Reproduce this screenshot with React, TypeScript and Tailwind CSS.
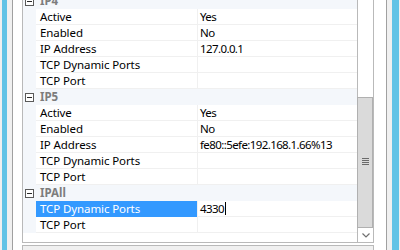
import React from "react";

type Item = { name: string; value: string; selected?: boolean };
type Group = { title: string; items: Item[] };

const groups: Group[] = [
  {
    title: "IP4",
    items: [
      { name: "Active", value: "Yes" },
      { name: "Enabled", value: "No" },
      { name: "IP Address", value: "127.0.0.1" },
      { name: "TCP Dynamic Ports", value: "" },
      { name: "TCP Port", value: "" },
    ],
  },
  {
    title: "IP5",
    items: [
      { name: "Active", value: "Yes" },
      { name: "Enabled", value: "No" },
      { name: "IP Address", value: "fe80::5efe:192.168.1.66%13" },
      { name: "TCP Dynamic Ports", value: "" },
      { name: "TCP Port", value: "" },
    ],
  },
  {
    title: "IPAll",
    items: [
      { name: "TCP Dynamic Ports", value: "4330", selected: true },
      { name: "TCP Port", value: "" },
    ],
  },
];

function MinusBox() {
  return (
    <div className="w-[9px] h-[9px] border border-[#5a5a5a] bg-white flex items-center justify-center">
      <div className="w-[5px] h-[1px] bg-[#2a2a2a]" />
    </div>
  );
}

function HeaderRow({ title }: { title: string }) {
  return (
    <div className="flex h-[16px] items-center bg-[#f4f7fb]">
      <div className="w-[13px] flex items-center pl-[2px]">
        <MinusBox />
      </div>
      <div className="pl-[4px] text-[#7d7d7d] font-bold leading-none">{title}</div>
    </div>
  );
}

function ItemRow({ item }: { item: Item }) {
  return (
    <div className="flex h-[16px]">
      <div className="w-[13px] bg-[#f4f7fb]" />
      <div
        className={
          item.selected
            ? "w-[162px] border-r border-r-[#f0f0f0] bg-[#3399ff] text-white pl-[4px] flex items-center leading-none tracking-[-0.1px]"
            : "w-[162px] border-r border-r-[#f0f0f0] border-b border-b-[#f0f0f0] bg-white text-black pl-[4px] flex items-center leading-none tracking-[-0.1px]"
        }
      >
        {item.name}
      </div>
      <div className="flex-1 border-b border-b-[#f0f0f0] bg-white text-black pl-[2px] flex items-center leading-none tracking-[-0.6px]">
        <span>{item.value}</span>
        {item.selected && <span className="w-[1px] h-[13px] bg-black ml-[1px]" />}
      </div>
    </div>
  );
}

export default function App() {
  return (
    <div
      className="w-[400px] h-[250px] overflow-hidden bg-[#f0f0f0] flex text-[11.5px]"
      style={{ fontFamily: '"Noto Sans", "Open Sans", sans-serif' }}
    >
      <div className="w-[2px] bg-[#f0f0f0]" />
      <div className="w-[5px] bg-[#62c3e6]" />
      <div className="w-[5px] bg-[#f0f0f0]" />
      <div className="w-[1px] bg-[#a0a0a0]" />
      <div className="flex-1 bg-white flex flex-col">
        <div className="flex">
          <div className="w-[9px]" />
          <div className="w-[352px] h-[250px] -mt-[7px] border-l border-r border-b border-[#b9b9b9] flex">
            <div className="w-[334px] flex flex-col bg-white">
              {groups.map((g) => (
                <React.Fragment key={g.title}>
                  <HeaderRow title={g.title} />
                  {g.items.map((it, i) => (
                    <ItemRow key={i} item={it} />
                  ))}
                </React.Fragment>
              ))}
            </div>
            <div className="w-[16px] border-l border-[#b9b9b9] flex flex-col bg-white">
              <div className="h-[104px]" />
              <div className="h-[131px] -ml-[1px] border border-[#b0b0b0] bg-[#dadada] flex items-center justify-center">
                <div className="flex flex-col gap-[1px] mt-[-3px]">
                  <div className="w-[7px] h-[1px] bg-[#6a6a6a]" />
                  <div className="w-[7px] h-[1px] bg-[#6a6a6a]" />
                  <div className="w-[7px] h-[1px] bg-[#6a6a6a]" />
                  <div className="w-[7px] h-[1px] bg-[#6a6a6a]" />
                </div>
              </div>
              <div className="h-[14px] flex items-center justify-center bg-white">
                <svg width="8" height="5" viewBox="0 0 8 5">
                  <path d="M0.5 0.5 L4 4 L7.5 0.5" stroke="#707070" strokeWidth="1.2" fill="none" />
                </svg>
              </div>
            </div>
          </div>
        </div>
        <div className="flex mt-[2px]">
          <div className="w-[9px]" />
          <div className="w-[352px] h-[20px] border-l border-t border-r border-[#b9b9b9] bg-[#f0f0f0]" />
        </div>
      </div>
      <div className="w-[1px] bg-[#a0a0a0]" />
      <div className="w-[5px] bg-[#f0f0f0]" />
      <div className="w-[7px] bg-[#62c3e6]" />
      <div className="w-[1px] bg-[#f0f0f0]" />
    </div>
  );
}
